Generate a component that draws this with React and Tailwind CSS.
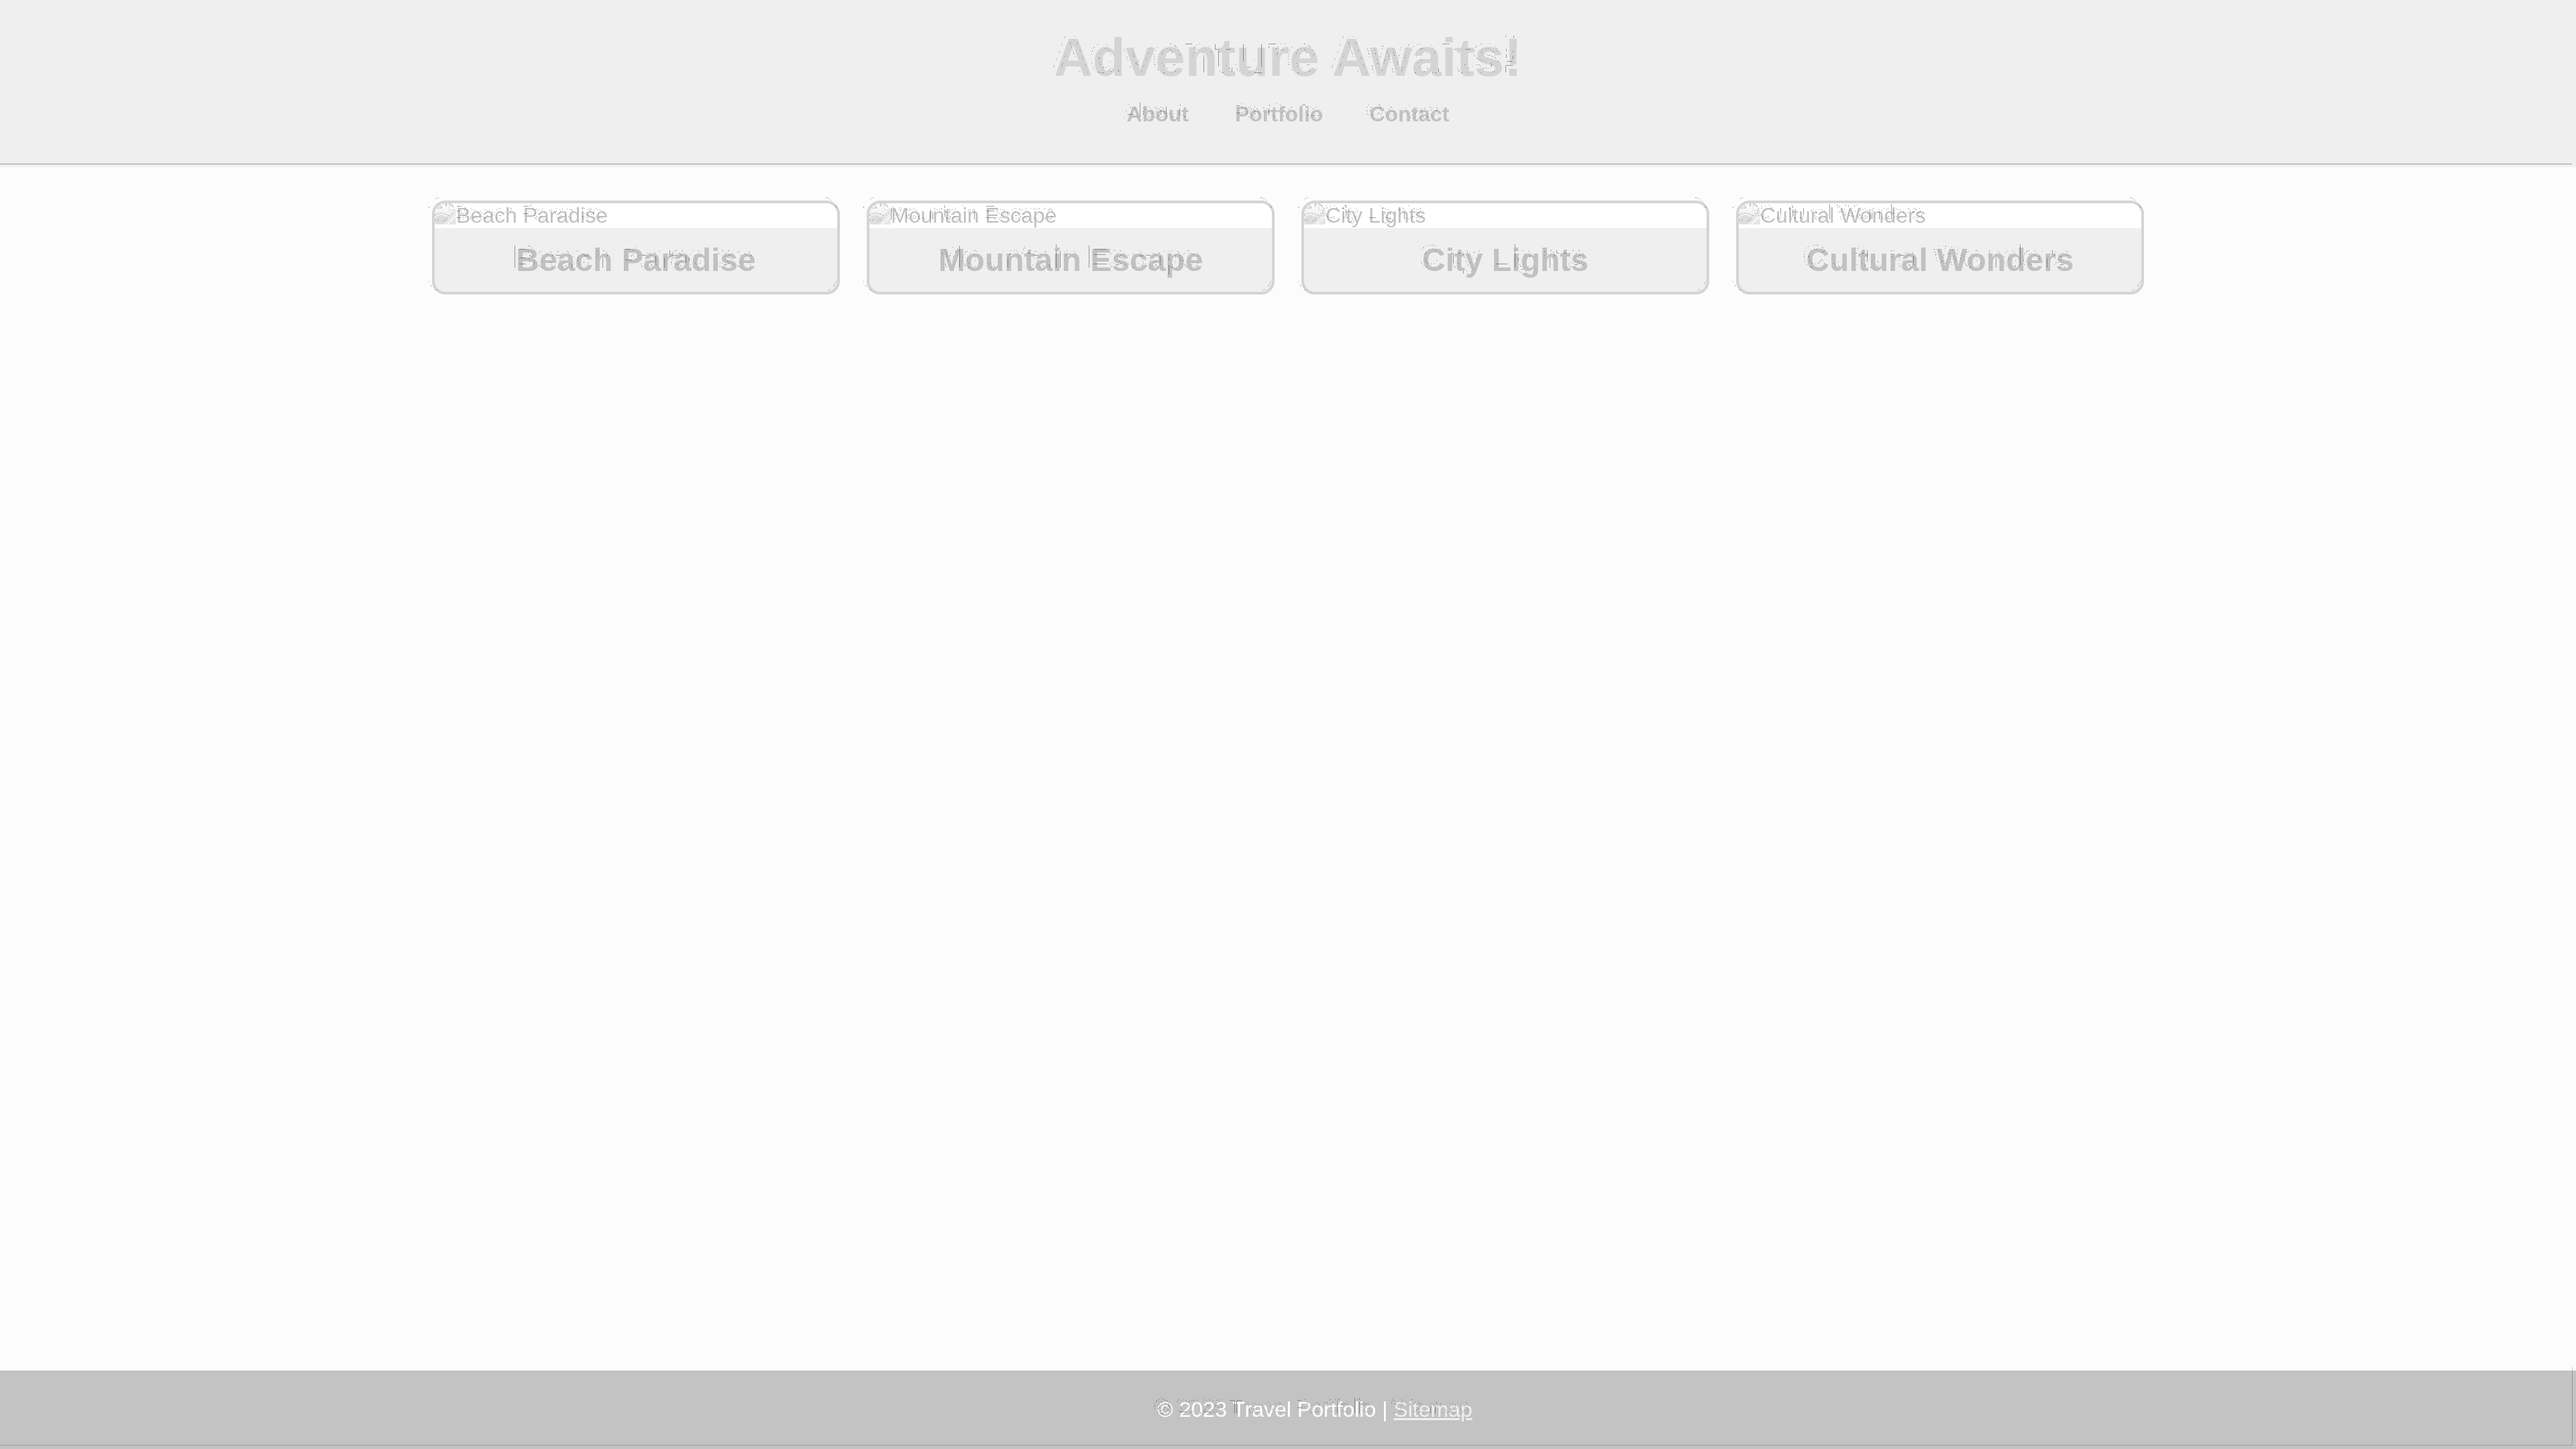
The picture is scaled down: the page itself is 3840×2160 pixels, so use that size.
const cards = ["Beach Paradise", "Mountain Escape", "City Lights", "Cultural Wonders"];
const links = ["About", "Portfolio", "Contact"];

/* Draws the soft edge pixels of an element again, up and to the left of it. */
function EchoFilter() {
  return (
    <svg width="0" height="0" className="absolute" aria-hidden="true">
      <filter id="echo" x="-10%" y="-20%" width="120%" height="140%" colorInterpolationFilters="sRGB">
        <feColorMatrix in="SourceGraphic" type="matrix" values="0 0 0 0 0.3  0 0 0 0 0.3  0 0 0 0 0.3  0 0 0 1 0" />
        <feComponentTransfer>
          <feFuncA type="discrete" tableValues="0 0 0.55 0.55 0 0 0.55 0 0 0 0 0" />
        </feComponentTransfer>
        <feOffset dx="-5" dy="-5" result="edge" />
        <feMerge>
          <feMergeNode in="SourceGraphic" />
          <feMergeNode in="edge" />
        </feMerge>
      </filter>
    </svg>
  );
}

function BrokenImage() {
  return (
    <svg viewBox="0 0 32 32" className="size-8 shrink-0" aria-hidden="true">
      <defs>
        <linearGradient id="sky" x1="0" y1="0" x2="0" y2="1">
          <stop offset="0" stopColor="#fbfbfb" />
          <stop offset="1" stopColor="#e8e8e8" />
        </linearGradient>
      </defs>
      <path d="M2 1H22L31 10V19L17 31H1V2Z" fill="url(#sky)" stroke="#e0e0e0" />
      <path d="M1 29V22Q8 14 16 20L20 24L13 31H1Z" fill="#dedede" />
      <path d="M31 22V31H21Z" fill="#e6e6e6" stroke="#dedede" />
      <path d="M22 1V10H31Z" fill="#fff" stroke="#d8d8d8" />
      <g fill="none" stroke="#777" strokeWidth="1" strokeOpacity=".7">
        <path d="M17 0V5M20 -2L28 5" />
        <path d="M1 7Q2 3 6 3T11 7Z" strokeOpacity=".5" />
        <path d="M0 18Q8 12 18 17L22 19M0 25H8M12 27L29 12M16 27L29 15" strokeDasharray="2 2" />
      </g>
    </svg>
  );
}

export default function App() {
  return (
    <div className="flex min-h-screen flex-col bg-[#fcfcfc] font-['Liberation_Sans',Arial,sans-serif] text-[32px] leading-[37px] text-[#c1c1c1]">
      <EchoFilter />
      <header className="relative bg-[#efefef] px-10 pt-10 pb-[60px] text-center">
        <h1 className="text-[80px] leading-[92px] font-bold text-[#d4d4d4] [filter:url(#echo)]">Adventure Awaits!</h1>
        <nav className="mt-5 flex justify-center gap-[69px] font-bold">
          {links.map((l) => (
            <a key={l} href={"#" + l.toLowerCase()} className="[filter:url(#echo)]">{l}</a>
          ))}
        </nav>
        <div className="absolute right-[6px] bottom-1 left-0 h-px bg-[#9d9d9d]" />
      </header>

      <main className="flex flex-1 flex-wrap content-start justify-center gap-10 py-[50px]">
        {cards.map((c) => (
          <article key={c} className="w-[608px] [filter:url(#echo)]">
            <div className="overflow-hidden rounded-[20px] border-4 border-[#d4d4d4] bg-[#efefef]">
              <div className="flex bg-white">
                <BrokenImage />
                <span className="[filter:url(#echo)]">{c}</span>
              </div>
              <h2 className="py-5 text-center text-[48px] leading-[55px] font-bold [filter:url(#echo)]">{c}</h2>
            </div>
          </article>
        ))}
      </main>

      <footer className="relative bg-[#c3c3c3] py-10 pr-10 pl-[120px] text-center text-white">
        <p className="[filter:url(#echo)]">
          © 2023 Travel Portfolio | <a href="#sitemap" className="text-[#efefef] underline">Sitemap</a>
        </p>
        <div className="absolute -top-[5px] right-[5px] bottom-[5px] left-0 border-r border-b border-black/20" />
      </footer>
    </div>
  );
}
